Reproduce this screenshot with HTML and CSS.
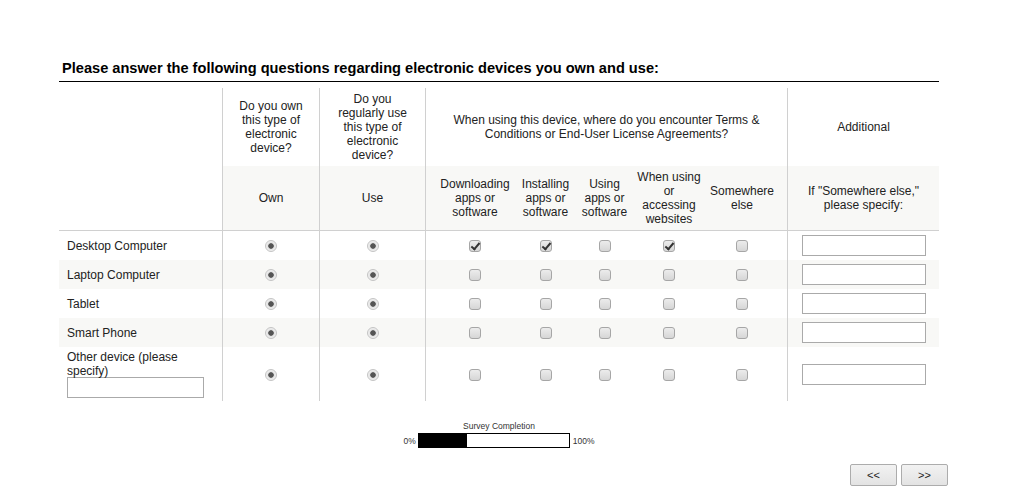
FILE: index.html
```html
<!DOCTYPE html>
<html lang="en">
<head>
<meta charset="utf-8">
<title>Survey</title>
<link rel="stylesheet" href="styles.css">
</head>
<body>
<div class="page">
  <h1 class="title">Please answer the following questions regarding electronic devices you own and use:</h1>
  <table class="grid">
    <colgroup>
      <col class="c-label"><col class="c-own"><col class="c-use">
      <col class="c-s1"><col class="c-s2"><col class="c-s3"><col class="c-s4"><col class="c-s5">
      <col class="c-add">
    </colgroup>
    <thead>
      <tr class="hr1">
        <th rowspan="2" class="blank"></th>
        <th class="bl pad-own">Do you own this type of electronic device?</th>
        <th class="bl pad-use">Do you regularly use this type of electronic device?</th>
        <th class="bl" colspan="5">When using this device, where do you encounter Terms &amp; Conditions or End-User License Agreements?</th>
        <th class="bl">Additional</th>
      </tr>
      <tr class="hr2">
        <th class="bl">Own</th>
        <th class="bl">Use</th>
        <th class="bl s1">Downloading apps or software</th>
        <th class="s2">Installing apps or software</th>
        <th class="s3">Using apps or software</th>
        <th class="s4">When using or accessing websites</th>
        <th class="s5">Somewhere else</th>
        <th class="bl">If "Somewhere else," please specify:</th>
      </tr>
    </thead>
    <tbody>
      <tr class="row">
        <td class="label">Desktop Computer</td>
        <td class="bl ctr"><input type="radio" class="rd" checked></td>
        <td class="bl ctr"><input type="radio" class="rd" checked></td>
        <td class="bl ctr s1"><input type="checkbox" class="cb" checked></td>
        <td class="ctr s2"><input type="checkbox" class="cb" checked></td>
        <td class="ctr s3"><input type="checkbox" class="cb"></td>
        <td class="ctr s4"><input type="checkbox" class="cb" checked></td>
        <td class="ctr s5"><input type="checkbox" class="cb"></td>
        <td class="bl ctr"><input type="text" class="txt"></td>
      </tr>
      <tr class="row alt">
        <td class="label">Laptop Computer</td>
        <td class="bl ctr"><input type="radio" class="rd" checked></td>
        <td class="bl ctr"><input type="radio" class="rd" checked></td>
        <td class="bl ctr s1"><input type="checkbox" class="cb"></td>
        <td class="ctr s2"><input type="checkbox" class="cb"></td>
        <td class="ctr s3"><input type="checkbox" class="cb"></td>
        <td class="ctr s4"><input type="checkbox" class="cb"></td>
        <td class="ctr s5"><input type="checkbox" class="cb"></td>
        <td class="bl ctr"><input type="text" class="txt"></td>
      </tr>
      <tr class="row">
        <td class="label">Tablet</td>
        <td class="bl ctr"><input type="radio" class="rd" checked></td>
        <td class="bl ctr"><input type="radio" class="rd" checked></td>
        <td class="bl ctr s1"><input type="checkbox" class="cb"></td>
        <td class="ctr s2"><input type="checkbox" class="cb"></td>
        <td class="ctr s3"><input type="checkbox" class="cb"></td>
        <td class="ctr s4"><input type="checkbox" class="cb"></td>
        <td class="ctr s5"><input type="checkbox" class="cb"></td>
        <td class="bl ctr"><input type="text" class="txt"></td>
      </tr>
      <tr class="row alt">
        <td class="label">Smart Phone</td>
        <td class="bl ctr"><input type="radio" class="rd" checked></td>
        <td class="bl ctr"><input type="radio" class="rd" checked></td>
        <td class="bl ctr s1"><input type="checkbox" class="cb"></td>
        <td class="ctr s2"><input type="checkbox" class="cb"></td>
        <td class="ctr s3"><input type="checkbox" class="cb"></td>
        <td class="ctr s4"><input type="checkbox" class="cb"></td>
        <td class="ctr s5"><input type="checkbox" class="cb"></td>
        <td class="bl ctr"><input type="text" class="txt"></td>
      </tr>
      <tr class="row last">
        <td class="label other">
          <span class="other-text">Other device (please specify)</span>
          <input type="text" class="txt other-input">
        </td>
        <td class="bl ctr"><input type="radio" class="rd" checked></td>
        <td class="bl ctr"><input type="radio" class="rd" checked></td>
        <td class="bl ctr s1"><input type="checkbox" class="cb"></td>
        <td class="ctr s2"><input type="checkbox" class="cb"></td>
        <td class="ctr s3"><input type="checkbox" class="cb"></td>
        <td class="ctr s4"><input type="checkbox" class="cb"></td>
        <td class="ctr s5"><input type="checkbox" class="cb"></td>
        <td class="bl ctr"><input type="text" class="txt"></td>
      </tr>
    </tbody>
  </table>

  <div class="progress-wrap">
    <div class="progress">
      <div class="p-caption">Survey Completion</div>
      <span class="p-min">0%</span>
      <div class="p-bar"><div class="p-fill" style="width:32%"></div></div>
      <span class="p-max">100%</span>
    </div>
  </div>
</div>

<div class="nav">
  <button type="button" class="btn">&lt;&lt;</button>
  <button type="button" class="btn">&gt;&gt;</button>
</div>
</body>
</html>
```

FILE: styles.css
```css
* { box-sizing: border-box; }

body {
  margin: 0;
  background: #fff;
  font-family: "Liberation Sans", Arial, sans-serif;
  color: #222;
}

.page {
  width: 880px;
  margin-left: 59px;
  padding-top: 59px;
}

.title {
  margin: 0;
  padding: 0 0 4px 3px;
  font-size: 14.6px;
  line-height: 18px;
  font-weight: bold;
  color: #000;
  border-bottom: 1px solid #000;
}

/* ---------- grid table ---------- */
.grid {
  width: 880px;
  margin-top: 6px;
  border-collapse: separate;
  border-spacing: 0;
  table-layout: fixed;
  font-size: 12px;
  line-height: 14px;
}

.c-label { width: 163px; }
.c-own { width: 97px; }
.c-use { width: 106px; }
.c-s1 { width: 93px; }
.c-s2 { width: 55px; }
.c-s3 { width: 63px; }
.c-s4 { width: 66px; }
.c-s5 { width: 85px; }
.c-add { width: 152px; }

.grid th {
  font-weight: normal;
  text-align: center;
  vertical-align: middle;
  padding: 4px 10px;
}

.grid .bl { border-left: 1px solid #d0d0d0; }

.hr1 { height: 78px; }
.hr1 .pad-own { padding: 4px 10px; }
.hr1 .pad-use { padding: 4px 12px; }

.hr2 { height: 65px; }
.hr2 th {
  background: #f8f8f6;
  border-bottom: 1px solid #d0d0d0;
}
.grid .blank { border-bottom: 1px solid #d0d0d0; background: #fff; }

.grid .s1 { padding-left: 6px; padding-right: 0; }
.grid .s2 { padding-left: 0; padding-right: 0; }
.grid .s3 { padding-left: 3px; padding-right: 3px; }
.grid .s4 { padding-left: 0; padding-right: 0; }
.grid .s5 { padding-left: 0; padding-right: 5px; }

.row { height: 29px; }
.row.alt td { background: #f8f8f6; }

.grid td {
  padding: 0 8px;
  vertical-align: middle;
}
.grid td.ctr { text-align: center; }
.grid td.label { padding-left: 8px; }
.grid td.other { padding: 3px 8px 3px 8px; }

/* ---------- controls ---------- */
.rd {
  -webkit-appearance: none;
  appearance: none;
  display: inline-block;
  vertical-align: middle;
  margin: 0;
  width: 12px;
  height: 12px;
  border-radius: 50%;
  border: 1px solid #c4c4c4;
  background: radial-gradient(circle, #555 0, #555 2.4px, #e2e2e2 3.1px, #f0f0f0 5px);
}

.cb {
  -webkit-appearance: none;
  appearance: none;
  position: relative;
  display: inline-block;
  vertical-align: middle;
  margin: 0;
  width: 12px;
  height: 12px;
  border-radius: 3px;
  border: 1px solid #a6a6a6;
  background: linear-gradient(#ececec, #d6d6d6);
}
.cb:checked::after {
  content: "";
  position: absolute;
  left: 3px;
  top: 0px;
  width: 3px;
  height: 7px;
  border-right: 2px solid #333;
  border-bottom: 2px solid #333;
  transform: rotate(40deg);
}

.txt {
  display: inline-block;
  vertical-align: middle;
  margin: 0;
  width: 124px;
  height: 21px;
  padding: 0 3px;
  border: 1px solid #aaa;
  background: #fff;
  font: inherit;
}

.other-text { display: block; width: 120px; }
.txt.other-input {
  display: block;
  margin-top: -1px;
  width: 137px;
  height: 21px;
}

/* ---------- progress ---------- */
.progress-wrap {
  display: flex;
  justify-content: center;
  margin-top: 20px;
}
.progress {
  display: grid;
  grid-template-columns: auto 152px auto;
  column-gap: 2px;
  row-gap: 2px;
  align-items: center;
  font-size: 8.5px;
  line-height: 10px;
  color: #333;
}
.p-caption {
  grid-column: 1 / 4;
  text-align: center;
}
.p-max { margin-left: 1px; }
.p-bar {
  height: 15px;
  border: 1px solid #000;
  background: #fff;
}
.p-fill {
  height: 100%;
  background: #000;
}

/* ---------- nav ---------- */
.nav {
  width: 948px;
  display: flex;
  justify-content: flex-end;
  gap: 4px;
  margin-top: 16px;
}
.btn {
  width: 47px;
  height: 22px;
  margin: 0;
  padding: 0;
  border: 1px solid #acacac;
  border-radius: 2px;
  background: linear-gradient(#f2f2f2, #e3e3e3);
  font-family: "Liberation Sans", Arial, sans-serif;
  font-size: 11px;
  color: #222;
  cursor: pointer;
}
```
